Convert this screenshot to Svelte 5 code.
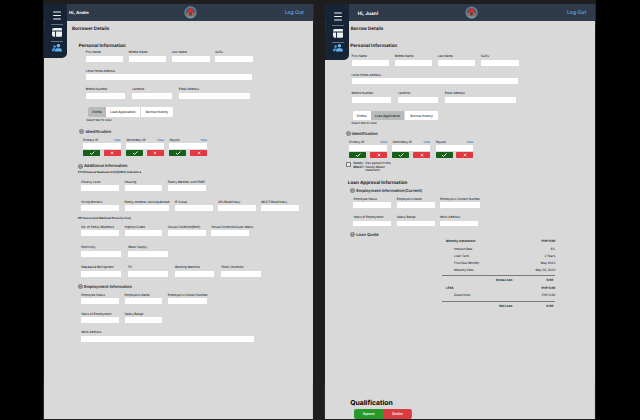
<script>
  const names = [['First Name', 37.7], ['Middle Name', 37.7], ['Last Name', 37.7], ['Suffix', 37.7]];
  const address = [['Local Home Address', 166.5]];
  const contact = [['Mobile Number', 39.7], ['Landline', 39.7], ['Email Address', 71.6]];
  const ppi1 = [['Poverty Level', 37.9], ['Housing', 37.9], ['Family Member with FNBT', 38]];
  const ppi2 = [['Hiring Workers', 37.9], ['Family member working abroad', 44.7], ['IP Group', 38], ['4Ps Beneficiary', 37.8], ['MCCT Beneficiary', 37.8]];
  const ppi3 = [['No. of Family Members', 37.9], ['Highest Grade', 37.9], ['House Condition(Roof)', 38], ['House Condition(Outer Walls)', 38]];
  const utilities = [['Electricity', 39.8], ['Water Supply', 39.8]];
  const goods = [['Refrigerator', 39.8, 'Has own a'], ['TV', 39.8], ['Washing Machine', 39.8], ['Toilet Condition', 39.8]];
  const job = [['Employee Status', 37.9], ['Employer/s Name', 37.9], ['Employer/s Contact Number', 39.6]];
  const jobMore = [['Years of Employment', 37.9], ['Salary Range', 37.9]];
  const work = [['Work Address', 173]];
  const jobCurrent = [['Years of Employment', 37.9], ['Salary Range', 37.9], ['Work Address', 37.9]];
  const quote = [['Interest Rate', '6%'], ['Loan Term', '2 Years'], ['First Due (Month)', 'May 2023'], ['Maturity Date', 'May 30, 2023']];
</script>

{#snippet fields(items, top, left, gap = 5.4)}
  <div class="fields" style:margin-top="{top}px" style:margin-left="{left}px" style:gap="{gap}px">
    {#each items as [label, width, strong]}
      <div class="field" style:width="{width}px">
        <span>{#if strong}<b>{strong}</b>{' '}{/if}{label}</span>
        <i></i>
      </div>
    {/each}
  </div>
{/snippet}

{#snippet section(text, top, left)}
  <div class="section" style:margin-top="{top}px" style:margin-left="{left}px">
    <svg viewBox="0 0 10 10"><circle cx="5" cy="5" r="4.2" fill="#b4b6b8" stroke="#53575c" stroke-width="1.2" /><path d="M2.7 4l2.3 2.4L7.3 4" fill="none" stroke="#43474c" stroke-width="1.3" /></svg>
    <span>{text}</span>
  </div>
{/snippet}

{#snippet header(name)}
  <header>
    <strong>{name}</strong>
    <svg class="seal" viewBox="0 0 26 26">
      <circle cx="13" cy="13" r="12.3" fill="#4d7c9f" />
      <circle cx="13" cy="13" r="11" fill="none" stroke="#a8988c" stroke-width="1.6" stroke-dasharray="1.5 2" />
      <circle cx="13" cy="13" r="9" fill="#395675" />
      <path d="M3.5 17l3-4 6.500-1 6.500 1 3 4-3 5-6.500 2-6.500-2z" fill="#96705c" />
      <path d="M6 9l4-2 2-3h3l1 3 4 2-2 4-5 1-5-1z" fill="#ce302f" />
      <path d="M10 15l3-2 3 2-1 4h-4z" fill="#513d49" />
      <path d="M5 20q8 3 16 0l-3 4H8z" fill="#719aad" />
    </svg>
    <span class="logout">Log Out</span>
  </header>
{/snippet}

{#snippet sidebar()}
  <nav>
    <svg class="menu" viewBox="0 0 8 9"><path d="M.5 1h7M.5 4.5h7M.5 8h7" stroke="#f0f3f5" stroke-width="1" stroke-linecap="round" /></svg>
    <hr />
    <svg class="layout" viewBox="0 0 11 9"><path d="M2 0h7q2 0 2 2v.6H0V2q0-2 2-2zM0 3.5h3.200V9H2Q0 9 0 7zM4.200 3.500H11V7q0 2-2 2H4.200z" fill="#edf2f2" /></svg>
    <hr />
    <svg class="people" viewBox="0 0 10 8"><path d="M2.5 1.3a1.3 1.3 0 1 1 0 2.6 1.3 1.3 0 0 1 0-2.6zM0 7.2V6q0-1.6 1.6-1.6h1.6Q2.5 5.2 2.5 7.2z" fill="#4a9ddd" /><circle cx="6.4" cy="1.8" r="1.8" fill="#60b4f0" /><path d="M3 7.6V6.4q0-2.2 2.2-2.2h2.4q2.2 0 2.2 2.2v1.2z" fill="#60b4f0" /></svg>
  </nav>
{/snippet}

{#snippet ids(left)}
  <div class="ids" style:margin-left="{left}px">
    {#each ['Primary ID', 'Secondary ID', 'Payslip'] as id}
      <div class="id">
        <div class="idlabel"><span>{id}</span><a href="#view">View</a></div>
        <i></i>
        <div class="idbuttons">
          <button class="yes" aria-label="Accept"><svg viewBox="0 0 8 6"><path d="M2 3l1.5 1.5L6.5 1.5" fill="none" stroke="#fff" stroke-width=".9" /></svg></button>
          <button class="no" aria-label="Reject"><svg viewBox="0 0 8 6"><path d="M2.7 1.7l2.6 2.6M5.3 1.7L2.7 4.3" stroke="#fff" stroke-width=".7" /></svg></button>
        </div>
      </div>
    {/each}
  </div>
{/snippet}

{#snippet tabs(active)}
  <div class="tabs">
    {#each ['Profile', 'Loan Application', 'Borrow History'] as tab, n}
      <span class:active={n === active}>{tab}</span>
    {/each}
  </div>
  <div class="hint">Select tab to view</div>
{/snippet}

<div class="canvas">
  <section class="page left">
    {@render header('Hi, Andre')}
    {@render sidebar()}
    <h2>Borrower Details</h2>
    <h3>Personal Information</h3>
    {@render fields(names, 0, 41.7)}
    {@render fields(address, 6.2, 41.7)}
    {@render fields(contact, 6.2, 41.7, 6.9)}
    {@render tabs(0)}
    {@render section('Identification', 6.5, 35.3)}
    {@render ids(39)}
    {@render section('Additional Information', 7, 33.8)}
    <div class="sub">FITI(House &amp; Business Visit)(HBV) Indicators</div>
    {@render fields(ppi1, 3.5, 37.3)}
    {@render fields(ppi2, 7.9, 37.3)}
    <div class="sub gap">PPI Scorecard (National Poverty Line)</div>
    {@render fields(ppi3, 3.3, 37.3)}
    {@render fields(utilities, 8.1, 37.3, 6.9)}
    {@render fields(goods, 7.8, 37.3, 6.9)}
    {@render section('Employment Information', 6.9, 33.8)}
    {@render fields(job, 2.3, 37.3)}
    {@render fields(jobMore, 6.4, 37.3)}
    {@render fields(work, 6.4, 37.3)}
  </section>

  <section class="page right">
    {@render header('Hi, Juan!')}
    {@render sidebar()}
    <h2>Borrow Details</h2>
    <h3>Personal Information</h3>
    {@render fields(names, 0, 26.3)}
    {@render fields(address, 6, 26.3)}
    {@render fields(contact, 6.2, 26.3, 6.9)}
    {@render tabs(1)}
    {@render section('Identification', 5.5, 20.3)}
    {@render ids(24)}
    <div class="surety">
      <i></i>
      <b>Surety-<br />Maker?</b>
      <span>Has agreed to the<br />Surety-Maker<br />statement</span>
    </div>
    <h3 class="approval">Loan Approval Information</h3>
    {@render section('Employment Information(Current)', 1.4, 24.8)}
    {@render fields(job, 2, 28.2)}
    {@render fields(jobCurrent, 6.2, 28.2)}
    {@render section('Loan Quote', 5, 24.8)}
    <div class="quote">
      <div class="line bold"><span>Monthly Installment</span><span>PHP 0.00</span></div>
      {#each quote as [label, value]}
        <div class="line item"><span>{label}</span><span>{value}</span></div>
      {/each}
      <div class="total"><span>Gross Loan</span><span>0.00</span></div>
      <div class="line bold less"><span>LESS</span><span>PHP 0.00</span></div>
      <div class="line item"><span>Deductions</span><span>PHP 0.00</span></div>
      <div class="total net"><span>Net Loan</span><span>0.00</span></div>
    </div>
    <h1>Qualification</h1>
    <div class="decision"><button class="approve">Approve</button><button class="decline">Decline</button></div>
  </section>
</div>

<style>
  :global(body) { margin: 0; background: #000; }
  .canvas {
    box-sizing: border-box; width: 553px; height: 420px; margin-left: 43px; padding: 4px 1px 1px 1px;
    display: flex; gap: 12px; background: #1e1e1e;
    font-family: Inter, "Liberation Sans", sans-serif; font-weight: 500; color: #23292f;
    /* An imperceptible turn keeps the tiny labels off whole-pixel baselines. */
    transform: rotate(.01deg); text-rendering: geometricPrecision;
  }
  .page { position: relative; width: 269.3px; height: 415px; flex: none; background: #d9d9d9; overflow: hidden; box-sizing: border-box; }
  .canvas svg { display: block; flex: none; }
  header { height: 17.4px; box-sizing: border-box; display: flex; align-items: center; background: #2f3a4b; padding: 0 9.5px 0 25px; }
  .right header { padding: 0 8.5px 0 32.3px; }
  header strong { width: 114.8px; padding-top: 2.4px; font-size: 4.3px; color: #fff; letter-spacing: .05px; }
  .right header strong { width: 107.3px; font-size: 4.7px; }
  .seal { width: 13px; height: 13px; margin-top: .3px; }
  .logout { margin-left: auto; padding-top: 1.4px; font-size: 5.1px; color: #62a8e8; }
  nav {
    position: absolute; left: 0; top: 0; width: 23.3px; height: 54.3px; box-sizing: border-box; padding: 7.2px 0 0 2.3px;
    display: flex; flex-direction: column; align-items: center; background: #172435; border-bottom-right-radius: 5px;
  }
  .right nav { height: 55.5px; padding-top: 8px; }
  nav hr { width: 12.5px; height: .6px; border: 0; margin: 0; background: #617083; }
  .menu { width: 8px; height: 9px; margin-bottom: 3.6px; }
  .layout { width: 10.5px; height: 8.8px; margin: 3.8px 0 3.9px; }
  .people { width: 10px; height: 8px; margin-top: 2.2px; }
  h2, h3, h1 { margin: 0; font-weight: 700; color: #1d2126; }
  h2 { font-size: 4.6px; line-height: 6px; margin: 5.5px 0 0 28px; }
  h3 { font-size: 4.6px; height: 5.6px; line-height: 6px; margin: 11px 0 0 34.7px; }
  .right h2 { margin-left: 25.3px; }
  .right h3 { margin-left: 25px; padding-bottom: 4px; }
  .fields, .ids { display: flex; }
  .field { display: flex; flex-direction: column; flex: none; }
  .field span, .idlabel { height: 6.5px; font-size: 2.98px; line-height: 7.2px; white-space: nowrap; }
  .field i, .id i { display: block; height: 5.8px; background: #fff; border-radius: .5px; }
  .tabs {
    width: 85.3px; height: 9.6px; margin: 8.2px 0 0 44px; display: flex; overflow: hidden; border-radius: 1.2px;
    background: #fff; font-size: 3.1px; font-weight: 600; line-height: 10px; text-align: center; color: #303438;
  }
  .right .tabs { margin: 8.2px 0 0 27.3px; height: 8.8px; }
  .tabs span:nth-child(1) { width: 18px; }
  .tabs span:nth-child(2) { width: 33.5px; border-right: .5px solid #ddd; }
  .tabs span:nth-child(3) { flex: 1; }
  .tabs .active { background: #b8bbbb; color: #202428; }
  .hint { margin: .2px 0 0 42px; height: 5px; font-size: 3px; line-height: 6px; }
  .right .hint { margin: .5px 0 0 26px; }
  .section { height: 6px; display: flex; align-items: center; gap: 1.2px; font-size: 4.05px; line-height: 6px; font-weight: 600; }
  .section span { padding-top: .7px; }
  .section svg { width: 5px; height: 5px; }
  .ids { gap: 5.4px; margin-top: 2.3px; }
  .id { width: 37.8px; flex: none; }
  .idlabel { display: flex; justify-content: space-between; }
  .idlabel a { color: #2f69c5; text-decoration: none; }
  .idbuttons { display: flex; justify-content: space-between; margin-top: 1.3px; }
  .idbuttons button { width: 17px; height: 6px; padding: 0; border: 0; border-radius: .7px; display: flex; align-items: center; justify-content: center; }
  .idbuttons svg { width: 8px; height: 6px; }
  .idbuttons .yes { background: #176019; }
  .idbuttons .no { background: #e33840; }
  .sub { height: 5px; margin: 1px 0 0 34px; font-size: 2.9px; line-height: 5.8px; font-weight: 700; white-space: nowrap; }
  .sub.gap { margin-top: 4.5px; }
  .surety { display: flex; margin: 3.2px 0 0 20.8px; height: 12px; font-size: 3px; line-height: 3.6px; white-space: nowrap; }
  .surety i { width: 4.6px; height: 4.8px; margin-top: .7px; box-sizing: border-box; border: .5px solid #777; border-radius: .7px; background: #e9e9e9; }
  .surety b, .surety span { padding-top: .6px; }
  .surety b { width: 12px; margin-left: 2.6px; font-weight: 600; }
  .right .approval { height: 6px; line-height: 7px; margin: 6.5px 0 0 22.5px; padding: 0; }
  .quote { width: 113px; margin: -.1px 0 0 117px; font-size: 3px; line-height: 8.6px; }
  .line { display: flex; justify-content: space-between; height: 7.3px; padding-left: 3.8px; }
  .bold, .total { font-weight: 700; color: #16191c; }
  .item { padding-left: 11.8px; }
  .total { display: flex; border-top: 1px solid #777b7f; height: 9.3px; margin-top: 1px; padding-right: 2px; box-sizing: border-box; }
  .total.net { margin-top: 2px; }
  .total span:first-child { width: 70px; text-align: right; }
  .total span:last-child { margin-left: auto; }
  h1 { font-size: 6.8px; line-height: 9px; color: #000; margin: 88px 0 0 25px; }
  .decision { display: flex; width: 57.7px; height: 9.5px; margin: 2.2px 0 0 29px; border-radius: 2.3px; overflow: hidden; }
  .decision button { flex: 1; border: 0; padding: 0; color: #fff; font: 600 2.9px Inter, sans-serif; }
  .decision .approve { background: #279a2d; }
  .decision .decline { background: #d93c41; }
</style>
